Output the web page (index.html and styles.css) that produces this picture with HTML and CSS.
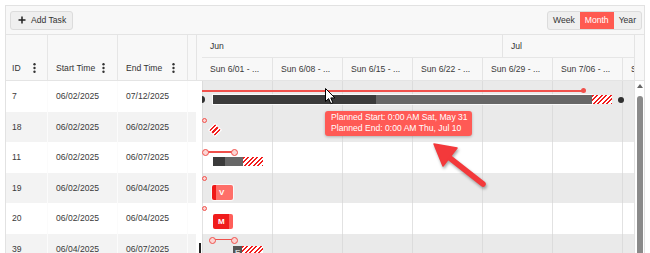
FILE: index.html
```html
<!DOCTYPE html>
<html>
<head>
<meta charset="utf-8">
<link rel="stylesheet" href="styles.css">
</head>
<body>
<div class="gantt">
  <div class="toolbar">
    <button class="btn-add"><svg class="plus" width="8" height="8" viewBox="0 0 8 8"><path d="M4 0.5V7.5M0.5 4H7.5" stroke="#222" stroke-width="1.5"/></svg>Add Task</button>
    <div class="views"><button>Week</button><button class="active">Month</button><button>Year</button></div>
  </div>
  <div class="main">
    <div class="grid">
      <div class="grid-head">
        <div class="hcell c-id"><span>ID</span><svg class="kebab" width="3" height="10" viewBox="0 0 3 10"><circle cx="1.5" cy="1.3" r="1.2"/><circle cx="1.5" cy="5" r="1.2"/><circle cx="1.5" cy="8.7" r="1.2"/></svg></div>
        <div class="hcell c-date"><span>Start Time</span><svg class="kebab" width="3" height="10" viewBox="0 0 3 10"><circle cx="1.5" cy="1.3" r="1.2"/><circle cx="1.5" cy="5" r="1.2"/><circle cx="1.5" cy="8.7" r="1.2"/></svg></div>
        <div class="hcell c-date"><span>End Time</span><svg class="kebab" width="3" height="10" viewBox="0 0 3 10"><circle cx="1.5" cy="1.3" r="1.2"/><circle cx="1.5" cy="5" r="1.2"/><circle cx="1.5" cy="8.7" r="1.2"/></svg></div>
        <div class="hcell c-fill"></div>
      </div>
      <div class="grid-body">
        <div class="grow"><div class="cell c-id">7</div><div class="cell c-date">06/02/2025</div><div class="cell c-date">07/12/2025</div><div class="cell c-fill"></div></div>
        <div class="grow"><div class="cell c-id">18</div><div class="cell c-date">06/02/2025</div><div class="cell c-date">06/02/2025</div><div class="cell c-fill"></div></div>
        <div class="grow"><div class="cell c-id">11</div><div class="cell c-date">06/02/2025</div><div class="cell c-date">06/07/2025</div><div class="cell c-fill"></div></div>
        <div class="grow"><div class="cell c-id">19</div><div class="cell c-date">06/02/2025</div><div class="cell c-date">06/04/2025</div><div class="cell c-fill"></div></div>
        <div class="grow"><div class="cell c-id">20</div><div class="cell c-date">06/02/2025</div><div class="cell c-date">06/04/2025</div><div class="cell c-fill"></div></div>
        <div class="grow"><div class="cell c-id">39</div><div class="cell c-date">06/04/2025</div><div class="cell c-date">06/07/2025</div><div class="cell c-fill"></div></div>
      </div>
    </div>
    <div class="splitter"><div class="split-head"></div><div class="split-mark"></div></div>
    <div class="chart">
      <div class="chart-head">
        <div class="months"><div class="month jun">Jun</div><div class="month jul">Jul</div></div>
        <div class="weeks">
          <div class="week">Sun 6/01 - ...</div>
          <div class="week">Sun 6/08 - ...</div>
          <div class="week">Sun 6/15 - ...</div>
          <div class="week">Sun 6/22 - ...</div>
          <div class="week">Sun 6/29 - ...</div>
          <div class="week">Sun 7/06 - ...</div>
          <div class="week">Sun 7/13 - ...</div>
        </div>
      </div>
      <div class="chart-body">
        <div class="crow gray">
          <div class="plan dot-end" style="left:0;width:382px;top:9px"></div>
          <div class="pt" style="left:-4px;top:15px"></div>
          <div class="bar" style="left:11px;width:379px;top:14px"><div class="seg done" style="width:163px"></div><div class="seg rest"></div></div>
          <div class="hatch" style="left:390px;width:20px;top:14px"></div>
          <div class="pt small" style="left:416px;top:16px"></div>
        </div>
        <div class="crow gray">
          <div class="ms" style="left:0;top:6px"></div>
          <div class="diamond" style="left:9px;top:14px"></div>
        </div>
        <div class="crow">
          <div class="plan cap" style="left:3px;width:30px;top:9px"></div>
          <div class="bar" style="left:11px;width:30px;top:15px"><div class="seg done" style="width:12px"></div><div class="seg rest"></div></div>
          <div class="hatch" style="left:41px;width:20px;top:15px"></div>
        </div>
        <div class="crow gray">
          <div class="ms" style="left:0;top:3px"></div>
          <div class="rbar light" style="left:10px;width:21px;top:12px"><span>V</span></div>
        </div>
        <div class="crow">
          <div class="ms" style="left:0;top:3px"></div>
          <div class="rbar strong" style="left:11px;width:20px;top:11px"><span>M</span></div>
        </div>
        <div class="crow gray">
          <div class="plan cap" style="left:10px;width:23px;top:5px"></div>
          <div class="ebar" style="left:31px;width:9px;top:12px"><span>E</span></div>
          <div class="hatch" style="left:40px;width:21px;top:12px"></div>
        </div>
      </div>
    </div>
    <div class="vscroll">
      <div class="vs-head"></div>
      <div class="vs-body"><div class="vs-arrow"></div><div class="vs-thumb"></div></div>
    </div>
  </div>

  <div class="tooltip">Planned Start: 0:00 AM Sat, May 31<br>Planned End: 0:00 AM Thu, Jul 10</div>
  <svg class="cursor" width="11" height="17" viewBox="0 0 11 17"><path d="M0.5 0.5V13.5L3.6 10.6L5.8 15.6L7.9 14.7L5.8 9.9H9.9Z" fill="#fff" stroke="#000" stroke-width="1" stroke-linejoin="round"/></svg>
  <svg class="pointer" width="75" height="60" viewBox="0 0 75 60"><line x1="26" y1="20" x2="63" y2="49" stroke="#f3393b" stroke-width="5.5" stroke-linecap="round"/><polygon points="14,9 37,13 23,31" fill="#f3393b" stroke="#f3393b" stroke-width="1.5" stroke-linejoin="round"/></svg>
</div>
</body>
</html>
```
FILE: styles.css
```css
* { box-sizing: border-box; }
body {
  margin: 0;
  background: #fff;
  font-family: "Liberation Sans", Arial, sans-serif;
  font-size: 8.6px;
  color: #333;
}
.gantt {
  position: relative;
  margin: 5px 0 0 5px;
  width: 640px;
  height: 260px;
  border: 1px solid #e2e2e2;
  overflow: hidden;
  background: #fff;
}
.toolbar {
  height: 29px;
  border-bottom: 1px solid #e4e4e4;
  background: #f8f8f8;
  display: flex;
  align-items: center;
  justify-content: space-between;
  padding: 0 2px 0 4px;
}
.btn-add {
  height: 19px;
  display: flex;
  align-items: center;
  gap: 5px;
  padding: 0 6px 0 7px;
  border: 1px solid #dcdcdc;
  border-radius: 3px;
  background: #efefef;
  font: inherit;
  color: #333;
}
.views {
  display: flex;
  height: 19px;
  border: 1px solid #dcdcdc;
  border-radius: 3px;
  overflow: hidden;
  background: #efefef;
}
.views button {
  border: 0;
  background: transparent;
  font: inherit;
  color: #333;
  padding: 0 5px;
}
.views button.active { background: #ff5a51; color: #fff; }

.main { display: flex; height: 240px; }

.grid { width: 190px; flex: 0 0 190px; display: flex; flex-direction: column; }
.grid-head {
  flex: 0 0 46px;
  height: 46px;
  display: flex;
  background: #f8f8f8;
  border-bottom: 1px solid #e4e4e4;
}
.grid-body { flex-shrink: 0; }
.hcell {
  display: flex;
  align-items: flex-end;
  padding-bottom: 7px;
  border-right: 1px solid #e6e6e6;
  line-height: 10px;
}
.hcell .kebab { margin-left: auto; fill: #333; }
.c-id { width: 42px; padding-left: 6px; }
.c-date { width: 70px; padding-left: 8px; }
.c-id .kebab { margin-right: 11px; }
.c-date .kebab { margin-right: 12px; }
.c-fill { width: 8px; border-right: 0; }
.grow { display: flex; height: 30.5px; }
.grow:nth-child(even) { background: #f3f3f3; }
.cell {
  display: flex;
  align-items: center;
  color: #3a3a3a;
  border-right: 1px solid #fbfbfb;
}
.cell.c-fill { border-right: 0; }

.splitter { width: 6px; flex: 0 0 6px; background: #fff; }
.split-head { height: 46px; background: #f8f8f8; border-bottom: 1px solid #e4e4e4; border-left: 1px solid #e4e4e4; }
.split-mark { margin: 162px 0 0 3px; width: 1.5px; height: 12px; background: #222; }

.chart { width: 432px; flex: 0 0 432px; display: flex; flex-direction: column; overflow: hidden; }
.chart-head { flex: 0 0 46px; height: 46px; background: #f8f8f8; border-bottom: 1px solid #e4e4e4; }
.chart-body { flex-shrink: 0; position: relative; }
.months { display: flex; height: 23px; border-bottom: 1px solid #e6e6e6; }
.month { display: flex; align-items: center; padding-left: 8px; color: #333; }
.jun { width: 300px; }
.jul { flex: 1; border-left: 1px solid #e4e4e4; }
.weeks { display: flex; height: 22px; overflow: hidden; }
.week {
  flex: 0 0 70px;
  display: flex;
  align-items: center;
  padding-left: 8px;
  white-space: nowrap;
  overflow: hidden;
  color: #3a3a3a;
}
.week + .week { border-left: 1px solid #e4e4e4; }

.crow {
  position: relative;
  height: 30.5px;
  background-color: #fff;
  background-image: linear-gradient(90deg, #e2e2e2 1px, transparent 1px);
  background-size: 70px 100%;
  background-position: 0 0;
}
.crow.gray { background-color: #eaeaea; background-image: linear-gradient(90deg, #dcdcdc 1px, transparent 1px); }

.plan { position: absolute; height: 1.5px; background: #f0504b; }
.plan.cap::before, .plan.cap::after {
  content: "";
  position: absolute;
  top: -2px;
  width: 5px;
  height: 5px;
  border: 1px solid #f0504b;
  border-radius: 50%;
  background: #fbd5d3;
}
.plan.cap::before { left: -3px; }
.plan.cap::after { right: -3px; }
.plan.dot-end::after {
  content: "";
  position: absolute;
  right: -2px;
  top: -2px;
  width: 5px;
  height: 5px;
  border-radius: 50%;
  background: #f0504b;
}
.ms {
  position: absolute;
  width: 5px;
  height: 5px;
  border: 1px solid #f0504b;
  border-radius: 50%;
  background: #fbd5d3;
}
.pt { position: absolute; width: 7px; height: 7px; border-radius: 50%; background: #2f2f2f; }
.pt.small { width: 6px; height: 6px; }
.bar {
  position: absolute;
  height: 9px;
  display: flex;
  box-shadow: 0 0 0 1px rgba(255,255,255,0.8);
}
.seg { height: 100%; }
.seg.done { background: #3b3b3b; }
.seg.rest { flex: 1; background: #676767; }
.hatch {
  position: absolute;
  height: 9px;
  background: repeating-linear-gradient(135deg, #f21c1c 0 1.6px, #fff 1.6px 3.2px);
}
.diamond {
  position: absolute;
  width: 8px;
  height: 8px;
  transform: rotate(45deg);
  background: repeating-linear-gradient(90deg, #f21c1c 0 1.6px, #fff 1.6px 3.2px);
  box-shadow: 0 0 0 1px #fff;
}
.rbar {
  position: absolute;
  height: 15px;
  border-radius: 2px;
  display: flex;
  align-items: center;
  padding-left: 7px;
  color: #fff;
  font-weight: bold;
  font-size: 8px;
  box-shadow: 0 0 0 1px rgba(255,255,255,0.7);
}
.rbar.light { background: linear-gradient(90deg, #f01818 0 4px, #ff6f69 4px); }
.rbar.strong { background: linear-gradient(90deg, #f01c1c 0 16px, #ff5f5a 16px); padding-left: 5px; }
.ebar {
  position: absolute;
  height: 12px;
  background: #555;
  color: #ddd;
  font-weight: bold;
  font-size: 8px;
  padding: 2px 0 0 2px;
}

.vscroll { flex: 1; border-left: 1px solid #e4e4e4; display: flex; flex-direction: column; }
.vs-head { flex: 0 0 46px; background: #f8f8f8; border-bottom: 1px solid #e4e4e4; }
.vs-body { flex: 1; display: flex; flex-direction: column; align-items: center; }
.vs-arrow {
  margin-top: 3px;
  width: 0;
  height: 0;
  border-left: 3.5px solid transparent;
  border-right: 3.5px solid transparent;
  border-bottom: 4px solid #666;
}
.vs-thumb { margin-top: 8px; width: 6px; flex: 1; border-radius: 3px; background: #8a8a8a; }

.tooltip {
  position: absolute;
  left: 319px;
  top: 105px;
  width: 147px;
  height: 25px;
  padding: 1px 0 0 6px;
  line-height: 11px;
  background: #ff5a55;
  color: #fff;
  border-radius: 3px;
  box-shadow: 0 1px 3px rgba(0,0,0,0.25);
  white-space: nowrap;
}
.cursor { position: absolute; left: 319px; top: 82px; }
.pointer {
  position: absolute;
  left: 414px;
  top: 129px;
  filter: drop-shadow(1px 2px 1.5px rgba(0,0,0,0.35));
}
```
